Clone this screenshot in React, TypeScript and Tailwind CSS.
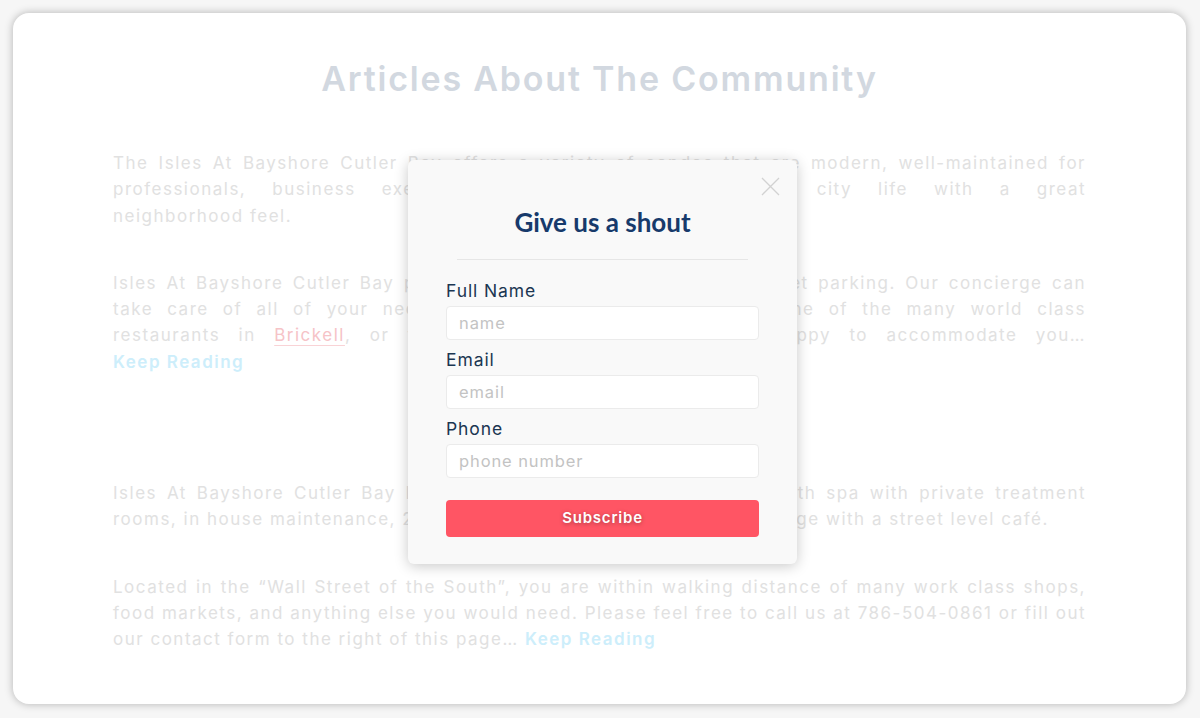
const body = "font-['Inter','Liberation_Sans',sans-serif]";

// each paragraph is split in its printed lines, so the justified lines match the picture
const paragraphs: { lines: React.ReactNode[]; gap: string }[] = [
	{
		gap: "mt-0",
		lines: [
			"The Isles At Bayshore Cutler Bay offers a variety of condos that are modern, well-maintained for",
			"professionals, business executives and families looking for city life with a great",
			"neighborhood feel.",
		],
	},
	{
		gap: "mt-[41px]",
		lines: [
			"Isles At Bayshore Cutler Bay provides 24 hour valet and secure street parking. Our concierge can",
			"take care of all of your needs from booking a reservation to one of the many world class",
			<>
				restaurants in{" "}
				<span className="text-[#f6c3c7] underline decoration-[#f9d3d6] underline-offset-4">Brickell</span>, or
				tickets to a show, and will be happy to accommodate you…
			</>,
			<span className="font-semibold text-[#cdeefb]">Keep Reading</span>,
		],
	},
	{
		gap: "mt-[105px]",
		lines: [
			"Isles At Bayshore Cutler Bay has a state of the art fitness center with spa with private treatment",
			"rooms, in house maintenance, 24 hour security, valet and a rooftop lounge with a street level café.",
		],
	},
	{
		gap: "mt-[41px]",
		lines: [
			"Located in the “Wall Street of the South”, you are within walking distance of many work class shops,",
			"food markets, and anything else you would need. Please feel free to call us at 786-504-0861 or fill out",
			<>
				our contact form to the right of this page…{" "}
				<span className="font-semibold text-[#cdeefb]">Keep Reading</span>
			</>,
		],
	},
];

const Field = ({ label, placeholder, first }: { label: string; placeholder: string; first?: boolean }) => (
	<div className={first ? "mt-[19px]" : "mt-[8px]"}>
		<label className="block text-[17.5px] leading-6 tracking-[0.9px] text-[#1b3652]">{label}</label>
		<input
			placeholder={placeholder}
			className="mt-[3px] h-[34px] w-full rounded-[4px] border border-[#ebebeb] bg-white px-3 text-[16.5px] tracking-[0.9px] text-[#333] outline-none placeholder:text-[#c3c3c3]"
		/>
	</div>
);

export default function App() {
	return (
		<div className="min-h-screen bg-[#f6f6f6] p-[13px]">
			<div className="relative h-[691px] w-[1173px] rounded-[16px] bg-white pt-[46px] shadow-[0_0_8px_rgba(0,0,0,0.28)]">
				{/* faded page behind the popup */}
				<h1 className={`${body} text-center text-[34px] font-semibold leading-10 tracking-[1.8px] text-[#d2d8e0]`}>
					Articles About The Community
				</h1>

				<div className={`${body} mx-[100px] mt-[51px] text-[17px] leading-[26.3px] tracking-[1.5px] text-[#e1e1e1]`}>
					{paragraphs.map((p, i) => (
						<div key={i} className={p.gap}>
							{p.lines.map((line, j) => (
								<div
									key={j}
									className={
										j < p.lines.length - 1
											? "whitespace-nowrap text-justify [text-align-last:justify]"
											: "whitespace-nowrap text-left"
									}
								>
									{line}
								</div>
							))}
						</div>
					))}
				</div>

				{/* popup */}
				<div className="absolute left-[395px] top-[147px] w-[389px] rounded-[6px] bg-[#f9f9f9] px-[38px] pb-[27px] pt-[46px] shadow-[0_2px_14px_rgba(0,0,0,0.22)]">
					<button className="absolute right-[17px] top-[17px]" aria-label="close">
						<svg width="19" height="19" viewBox="0 0 19 19" fill="none" stroke="#d2d2d2" strokeWidth="1.3">
							<path d="M1 1L18 18M18 1L1 18" />
						</svg>
					</button>
					<h2 className="text-center font-['Lato',sans-serif] text-[26px] font-bold leading-8 text-[#173a6b]">
						Give us a shout
					</h2>
					<div className="mx-[11px] mt-[21px] h-px bg-[#e6e6e6]" />

					<form className={body} onSubmit={(e) => e.preventDefault()}>
						<Field label="Full Name" placeholder="name" first />
						<Field label="Email" placeholder="email" />
						<Field label="Phone" placeholder="phone number" />
						<button className="mt-[22px] h-[37px] w-full rounded-[4px] bg-[#ff5564] text-[15px] font-semibold tracking-[0.8px] text-white [text-shadow:0_1px_4px_rgba(0,0,0,0.35)]">
							Subscribe
						</button>
					</form>
				</div>
			</div>
		</div>
	);
}
